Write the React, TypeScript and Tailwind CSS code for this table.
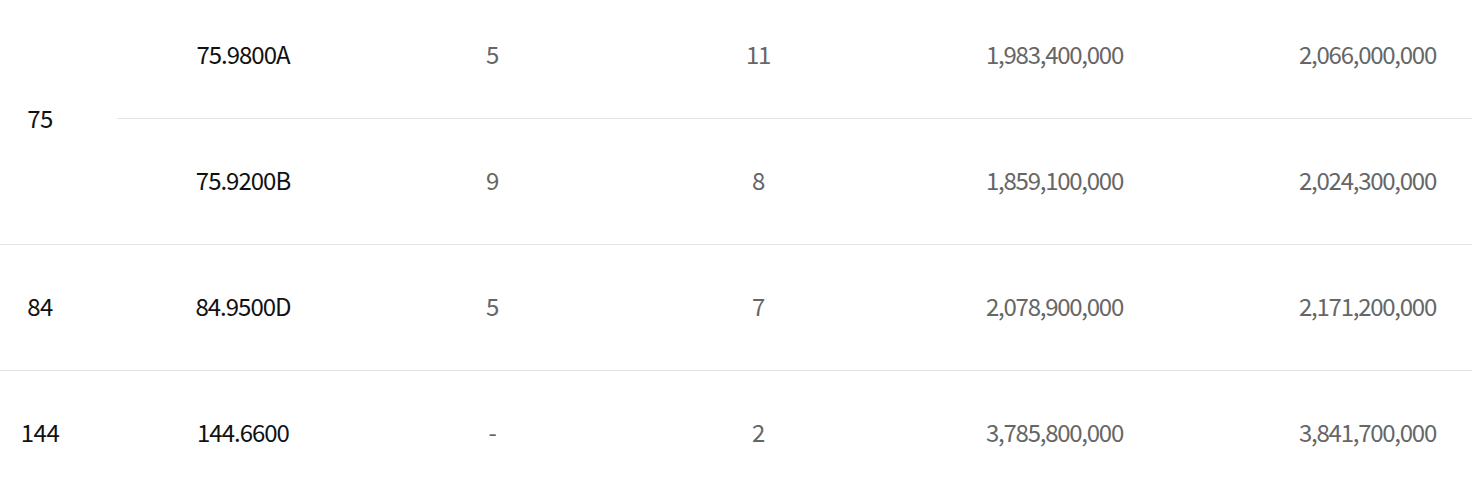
import React from "react";

type Sub = { type: string; a: string; b: string; p1: string; p2: string };
type Group = { area: string; subs: Sub[] };

const data: Group[] = [
  {
    area: "75",
    subs: [
      { type: "75.9800A", a: "5", b: "11", p1: "1,983,400,000", p2: "2,066,000,000" },
      { type: "75.9200B", a: "9", b: "8", p1: "1,859,100,000", p2: "2,024,300,000" },
    ],
  },
  {
    area: "84",
    subs: [{ type: "84.9500D", a: "5", b: "7", p1: "2,078,900,000", p2: "2,171,200,000" }],
  },
  {
    area: "144",
    subs: [{ type: "144.6600", a: "-", b: "2", p1: "3,785,800,000", p2: "3,841,700,000" }],
  },
];

export default function App() {
  return (
    <div
      className="w-[1472px] h-[491px] overflow-hidden bg-white"
      style={{ fontFamily: '"Noto Sans CJK KR", "Noto Sans", sans-serif' }}
    >
      <div className="mt-[-6px]">
        {data.map((g, gi) => (
          <div key={gi} className="flex border-b border-[#e3e3e3]">
            <div className="w-[117px] shrink-0 flex items-center justify-center pr-[37px] pb-[3px] text-[24px] tracking-[-0.5px] text-[#111]">
              {g.area}
            </div>
            <div className="flex-1 flex flex-col">
              {g.subs.map((s, si) => (
                <div
                  key={si}
                  className={
                    "grid grid-cols-[252px_246px_286px_259px_312px] h-[125px] pb-[4px] items-center text-[24px] tracking-[-1.25px] " +
                    (si < g.subs.length - 1 ? "border-b border-[#e3e3e3]" : "")
                  }
                >
                  <div className="text-center text-[#111] tracking-[-1px]">{s.type}</div>
                  <div className="text-center text-[#666]">{s.a}</div>
                  <div className="text-center text-[#666]">{s.b}</div>
                  <div className="text-right pr-[37px] text-[#666]">{s.p1}</div>
                  <div className="text-right pr-[36px] text-[#666]">{s.p2}</div>
                </div>
              ))}
            </div>
          </div>
        ))}
      </div>
    </div>
  );
}
